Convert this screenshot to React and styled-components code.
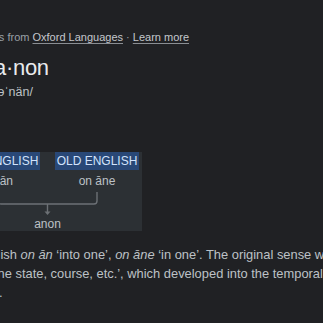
import React from "react";
import styled, { createGlobalStyle } from "styled-components";

const Global = createGlobalStyle`
  html, body { margin: 0; padding: 0; background: #202124; }
  body { font-family: "Liberation Sans", Arial, sans-serif; overflow: hidden; }
`;

const Page = styled.div`
  width: 323px;
  height: 323px;
  overflow: hidden;
  background: #202124;
`;

const Content = styled.div`
  margin-left: -47px;
  padding-top: 29px;
  display: flex;
  flex-direction: column;
  width: 440px;
`;

const Source = styled.div`
  font-size: 11px;
  line-height: 16px;
  color: #9aa0a6;
  white-space: nowrap;
`;

const Link = styled.span`
  color: #c4c7cc;
  text-decoration: underline;
  text-decoration-color: #8a8e93;
  text-underline-offset: 2px;
`;

const HeadBlock = styled.div`
  margin-top: 9px;
  padding-left: 41px;
  display: flex;
  flex-direction: column;
  gap: 2px;
`;

const Headword = styled.div`
  font-size: 22px;
  line-height: 28px;
  color: #e8eaed;
  letter-spacing: -0.3px;
`;

const Phonetic = styled.div`
  font-size: 12.5px;
  line-height: 16px;
  color: #bdc1c6;
`;

const Etym = styled.div`
  margin-top: 52px;
  align-self: flex-start;
  background: #2c3034;
  padding: 0 3px;
  display: flex;
  flex-direction: column;
  height: 79px;
`;

const Columns = styled.div`
  display: flex;
  gap: 15px;
`;

const Column = styled.div`
  width: 84px;
  display: flex;
  flex-direction: column;
  align-items: center;
`;

const Tag = styled.div`
  width: 100%;
  height: 18px;
  background: #294877;
  color: #d2e3fc;
  font-size: 12px;
  line-height: 18px;
  text-align: center;
  white-space: nowrap;
`;

const Word = styled.div`
  margin-top: 4px;
  font-size: 12px;
  line-height: 14px;
  color: #bdc1c6;
  white-space: nowrap;
`;

const Connector = styled.svg`
  display: block;
  margin-top: 4px;
`;

const Result = styled.div`
  width: 183px;
  text-align: center;
  font-size: 12px;
  line-height: 14px;
  color: #bdc1c6;
  margin-top: 1px;
`;

const Body = styled.p`
  margin: 15px 0 0 -2px;
  font-size: 12.9px;
  line-height: 18.8px;
  color: #bdc1c6;
  white-space: nowrap;
`;

export default function App() {
  return (
    <Page>
      <Global />
      <Content>
        <Source>
          Definitions from <Link>Oxford Languages</Link> · <Link>Learn more</Link>
        </Source>
        <HeadBlock>
          <Headword>a·non</Headword>
          <Phonetic>/əˈnän/</Phonetic>
        </HeadBlock>
        <Etym>
          <Columns>
            <Column>
              <Tag>OLD ENGLISH</Tag>
              <Word>on ān</Word>
            </Column>
            <Column>
              <Tag>OLD ENGLISH</Tag>
              <Word>on āne</Word>
            </Column>
          </Columns>
          <Connector width="183" height="24" viewBox="0 0 183 24">
            <path
              d="M42 0 V9 Q42 12 45 12 H138 Q141 12 141 9 V0 M91.5 12 V20"
              fill="none"
              stroke="#6c7075"
              strokeWidth="1.4"
            />
            <path d="M88.5 19.5 L91.5 23 L94.5 19.5 Z" fill="#6c7075" />
          </Connector>
          <Result>anon</Result>
        </Etym>
        <Body>
          Old English <i>on ān</i> ‘into one’, <i>on āne</i> ‘in one’. The original sense was ‘in
          <br />
          or into one state, course, etc.’, which developed into the temporal sense
          <br />
          ‘at once’.
        </Body>
      </Content>
    </Page>
  );
}
